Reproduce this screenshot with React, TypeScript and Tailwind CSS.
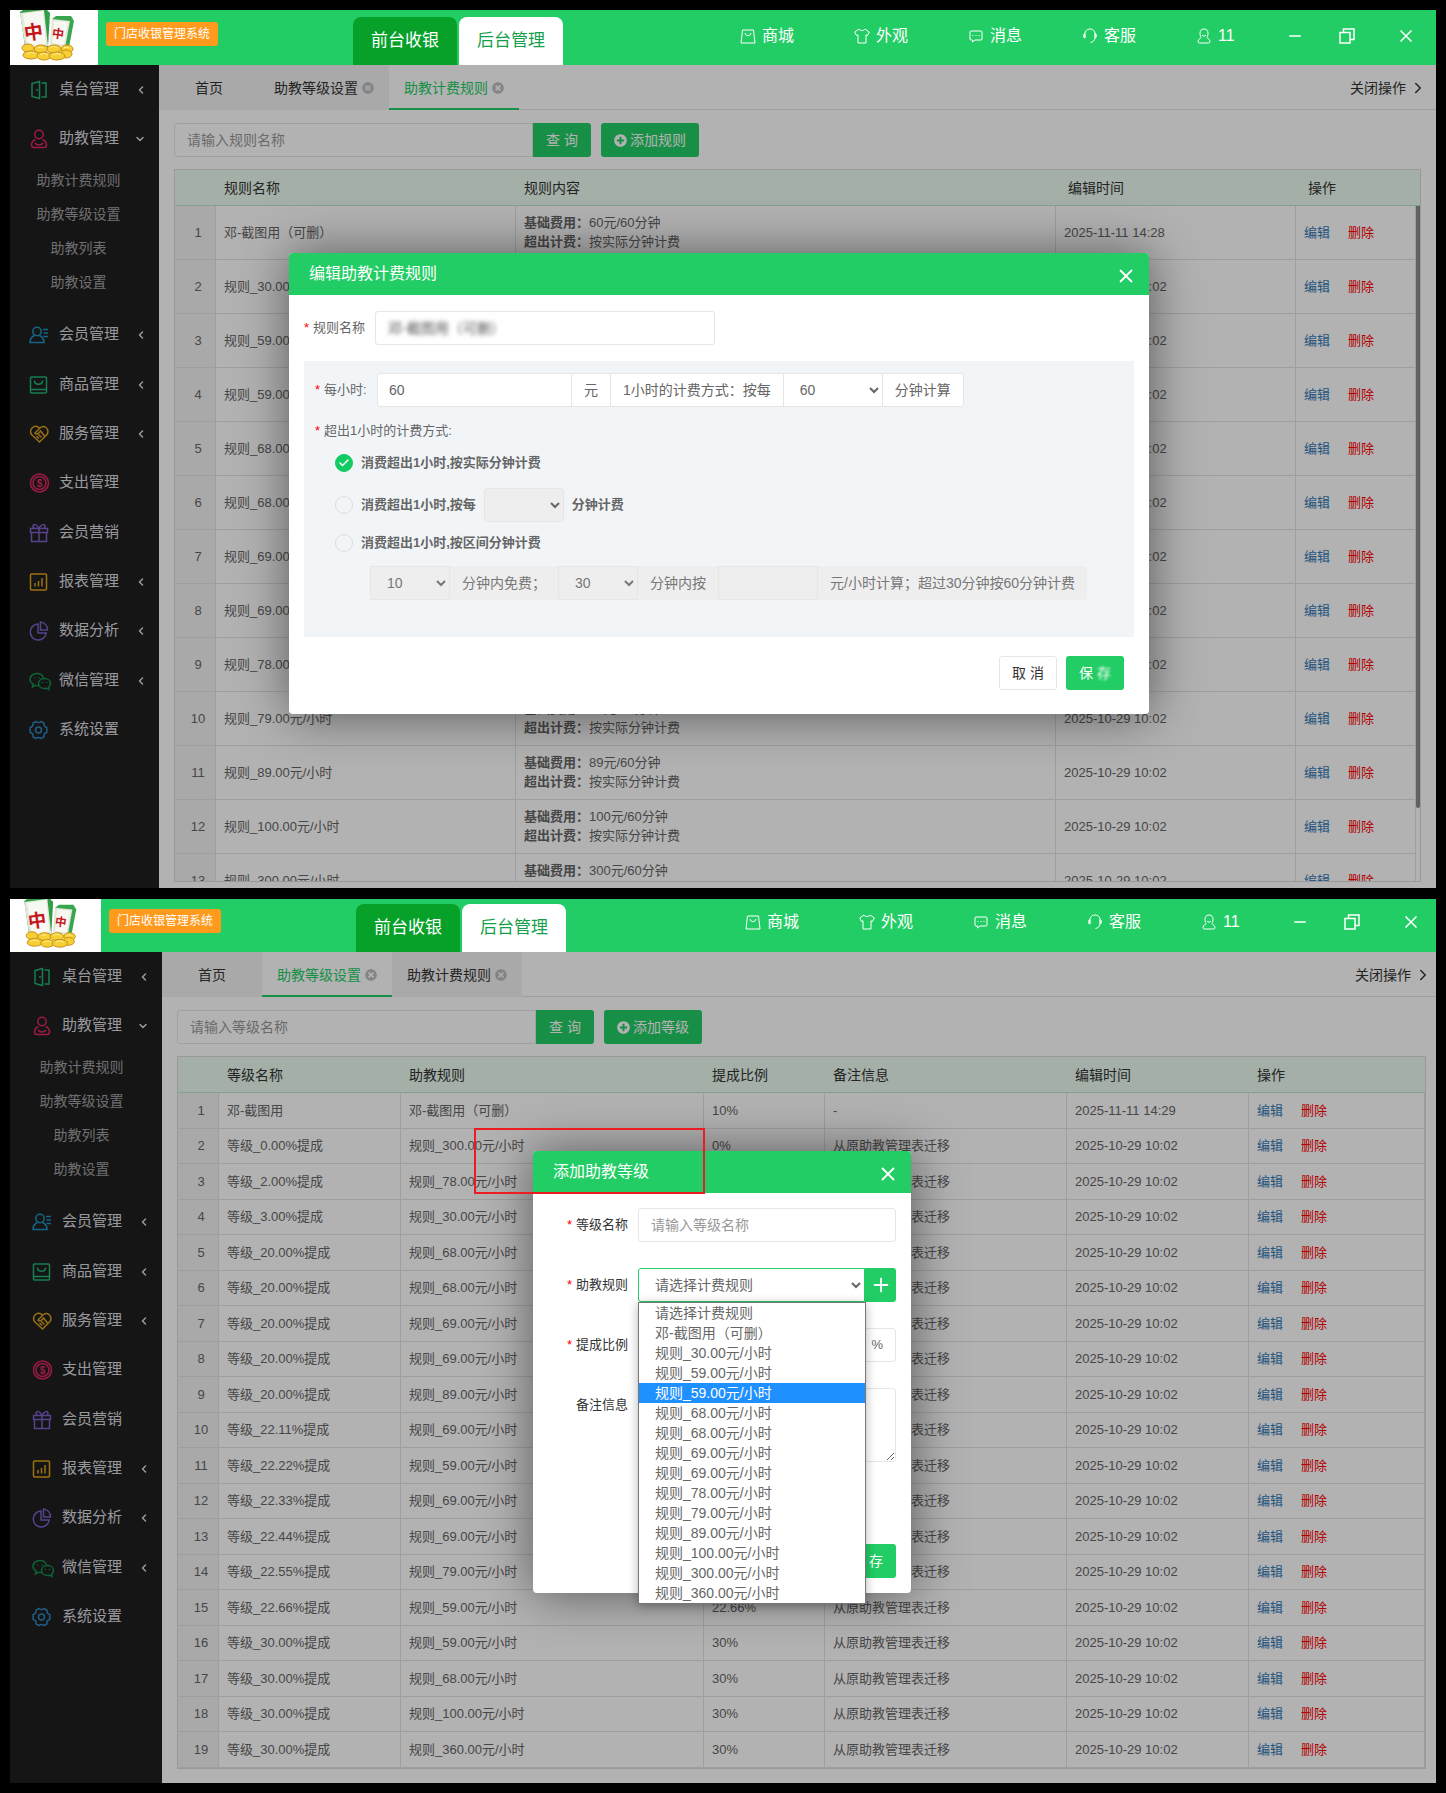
import { ReactNode } from "react";
import clsx from "clsx";
import { Check, ChevronDown, ChevronLeft, ChevronRight, Minus, Plus, X } from "lucide-react";
import { FaPlusCircle, FaTimesCircle } from "react-icons/fa";

const menu = [
  {
    label: "桌台管理",
    color: "text-[#22b573]",
    arrow: "left",
    icon: (
      <>
        <path d="M3 3.5 10.5 1.5v17L3 16.5zM12.5 3H17v14h-4.5M8 9v2" />
      </>
    ),
  },
  {
    label: "助教管理",
    color: "text-[#e02763]",
    arrow: "down",
    children: ["助教计费规则", "助教等级设置", "助教列表", "助教设置"],
    icon: (
      <>
        <circle cx="10" cy="5.5" r="4.2" />
        <path d="M6.5 10.5c-2.5 1-4 3-4 5.500 0 1.500.8 2.500 2.500 2.500h10c1.700 0 2.500-1 2.500-2.500 0-2.500-1.500-4.500-4-5.500M6 14c1 1.500 2.500 2 4 2s3-.5 4-2" />
      </>
    ),
  },
  {
    label: "会员管理",
    color: "text-[#1b93c4]",
    arrow: "left",
    icon: (
      <>
        <circle cx="8" cy="6.5" r="4.2" />
        <path d="M5.5 10.5C3 11.5 1 13.5 1 17.5h14c0-4-2-6-4.500-7M14 4.500h5M14.500 8h4.500M14.500 11.500h4.500" />
      </>
    ),
  },
  {
    label: "商品管理",
    color: "text-[#22b573]",
    arrow: "left",
    icon: (
      <>
        <rect x="1.5" y="2" width="16" height="16" rx="1" />
        <path d="M1.5 14.5h16M5.5 5.5c0 5 8 5 8 0" />
      </>
    ),
  },
  {
    label: "服务管理",
    color: "text-[#dba01f]",
    arrow: "left",
    icon: (
      <>
        <path d="M10.500 4C8.500 2 5.500 2 3.500 3.500 1 5.500 1 9 3 11l7.500 7L17.500 11c2-2 2-5.500-.5-7.500-2-1.500-4.500-1-6 .5L6 9c1 1.500 3 1.200 4-.3l1.500-1.700 4 5M7.500 12l2.500 2.500M9.500 10.500l3 3" />
      </>
    ),
  },
  {
    label: "支出管理",
    color: "text-[#e02763]",
    icon: (
      <>
        <circle cx="10.5" cy="10" r="9" />
        <circle cx="10.5" cy="10" r="6.5" />
        <text x="10.5" y="13.5" textAnchor="middle" fontSize="10" fontWeight="700" fill="currentColor" stroke="none">
          $
        </text>
      </>
    ),
  },
  {
    label: "会员营销",
    color: "text-[#7e5fc9]",
    icon: (
      <>
        <path d="M1.5 5.5h17v4h-17zM2.5 9.5h15v9h-15zM10 5.5v13M10 5.5C8 1 4 .5 4 3.2c0 1.300 1 2.300 2.500 2.300M10 5.500c2-4.500 6-5 6-2.300 0 1.300-1 2.300-2.500 2.300" />
      </>
    ),
  },
  {
    label: "报表管理",
    color: "text-[#e0a21c]",
    arrow: "left",
    icon: (
      <>
        <rect x="1.5" y="2" width="16" height="16" rx="1" />
        <path d="M6 11v3.5M9.500 9v5.500M13 6v8.500" />
      </>
    ),
  },
  {
    label: "数据分析",
    color: "text-[#7e5fc9]",
    arrow: "left",
    icon: (
      <>
        <path d="M9 3a8 8 0 1 0 8.2 9H9zM11.5 1v8h7C18.500 4.500 15.500 1.500 11.500 1z" />
      </>
    ),
  },
  {
    label: "微信管理",
    color: "text-[#138f4b]",
    arrow: "left",
    icon: (
      <>
        <path d="M9.500 14.500c-1 .1-2 0-3-.3L3.500 16l.6-3C2 11.800 1 10.200 1 8.500 1 5 4 2.500 7.800 2.500c3.500 0 6 2 6.700 4.600" />
        <path d="M15.500 7.500c-3.500 0-6 2.200-6 5s2.500 5 6 5c.8 0 1.500-.1 2.200-.3l2.300 1.300-.5-2.200c1.200-.9 2-2.300 2-3.800 0-2.800-2.500-5-6-5z" />
        <path d="M5.500 6.500v1M10 6.500v1M13.500 11v1M17.500 11v1" />
      </>
    ),
  },
  {
    label: "系统设置",
    color: "text-[#2f86bd]",
    icon: (
      <>
        <circle cx="9.5" cy="10" r="3" />
        <path d="M7 1.500c1.500 1.300 3.500 1.300 5 0l3 1.700c-.4 2 .6 3.700 2.800 4.300v5c-2.200.6-3.200 2.300-2.800 4.300l-3 1.700c-1.500-1.300-3.500-1.300-5 0l-3-1.700c.4-2-.6-3.700-2.800-4.300v-5C3.400 6.900 4.400 5.200 4 3.200z" />
      </>
    ),
  },
];

const headerItems = [
  {
    label: "商城",
    icon: <path d="M2.500 2h11l1.500 13H1zM5 5c.5 3.500 5.500 3.500 6 0" />,
  },
  {
    label: "外观",
    icon: <path d="M5 1 .7 4l1.800 3.500L4 6.800V15h8V6.800l1.500.7L15.300 4 11 1C10 3 6 3 5 1z" />,
  },
  {
    label: "消息",
    icon: <path d="M3 3h10q1 0 1 1v7q0 1-1 1H7l-2.500 2v-2H3q-1 0-1-1V4q0-1 1-1zM4.500 7.500h1M7.500 7.500h1M10.500 7.500h1" />,
  },
  {
    label: "客服",
    icon: (
      <path d="M3 9.500C2 3 5 1 8 1s6 2 5 8.500M3 5.500C1 5.500 1 10 3 10zM13 5.500c2 0 2 4.500 0 4.500zM13 10c-.5 2.500-2 4-4.500 4.500" />
    ),
  },
  {
    label: "11",
    icon: (
      <path d="M8 1C5 1 4 3 4 5.500S5 9.500 5 9.500L2.500 12c-1 1.500-.5 3 1 3h9c1.500 0 2-1.500 1-3L11 9.500s1-1.500 1-4S11 1 8 1zM6 7c1 1.500 3 1.500 4 0" />
    ),
  },
];

const rulePrices = ["30.00", "59.00", "59.00", "68.00", "68.00", "69.00", "69.00", "78.00", "79.00", "89.00", "100.00", "300.00"];

const rules = [
  { name: "邓-截图用（可删）", fee: 60, time: "2025-11-11 14:28" },
  ...rulePrices.map((p) => ({ name: `规则_${p}元/小时`, fee: parseInt(p), time: "2025-10-29 10:02" })),
];

const ruleOptions = [
  "请选择计费规则",
  "邓-截图用（可删）",
  ...[...rulePrices, "360.00"].map((p) => `规则_${p}元/小时`),
];

// level, price of the linked rule, commission
const levelData = [
  ["0.00", "300.00", "0"],
  ["2.00", "78.00", "2"],
  ["3.00", "30.00", "3"],
  ["20.00", "68.00", "20"],
  ["20.00", "68.00", "20"],
  ["20.00", "69.00", "20"],
  ["20.00", "69.00", "20"],
  ["20.00", "89.00", "20"],
  ["22.11", "69.00", "22.11"],
  ["22.22", "59.00", "22.22"],
  ["22.33", "69.00", "22.33"],
  ["22.44", "69.00", "22.44"],
  ["22.55", "79.00", "22.55"],
  ["22.66", "59.00", "22.66"],
  ["30.00", "59.00", "30"],
  ["30.00", "68.00", "30"],
  ["30.00", "100.00", "30"],
  ["30.00", "360.00", "30"],
];

const levels = [
  { name: "邓-截图用", rule: "邓-截图用（可删）", ratio: "10%", note: "-", time: "2025-11-11 14:29" },
  ...levelData.map(([level, price, ratio]) => ({
    name: `等级_${level}%提成`,
    rule: `规则_${price}元/小时`,
    ratio: `${ratio}%`,
    note: "从原助教管理表迁移",
    time: "2025-10-29 10:02",
  })),
];

const Logo = () => (
  <svg viewBox="0 0 88 55" className="h-full w-[88px]">
    <path d="M10 2 13 0h24l3 3-2 34H15z" fill="#2f9e46" />
    <path d="M10 3 34 0l4 36-22 6z" fill="#e4e6da" />
    <path d="m13 4 20-3 3 33-18 5z" fill="#f8f8f3" />
    <path d="m42 9 4-3h15l3 5-5 26-3 1z" fill="#37a64e" />
    <path d="m42 9 18 2-5 27-15-4z" fill="#e4e6da" />
    <path d="m44 11 14 1-4 23-12-2z" fill="#f8f8f3" />
    <text x="14" y="29" fontSize="19" fontWeight="700" fill="#c4161c" transform="rotate(-8 24 22)">
      中
    </text>
    <text x="42" y="28" fontSize="12" fontWeight="700" fill="#c4161c" transform="rotate(8 48 24)">
      中
    </text>
    <g fill="#f6cf35" stroke="#c78f12">
      <ellipse cx="18" cy="38" rx="6" ry="4" />
      <ellipse cx="31" cy="39" rx="7" ry="4" />
      <ellipse cx="57" cy="39" rx="6" ry="4" />
      <ellipse cx="44" cy="39" rx="7" ry="4" />
      <ellipse cx="21" cy="45" rx="8" ry="4" />
      <ellipse cx="56" cy="44" rx="6" ry="4" />
      <ellipse cx="34" cy="46" rx="7" ry="4" />
      <ellipse cx="47" cy="46" rx="8" ry="4" />
    </g>
    <g fill="none" stroke="#fff3a0">
      <path d="M17 44c2-2 6-2 8 0M30 45c2-2 6-2 8 0M43 45c2-2 6-2 8 0M40 38c2-2 5-2 7 0M54 38c1-1 4-1 5 0M28 38c1-1 4-1 5 0" />
    </g>
  </svg>
);

const TopBar = ({ compact }: { compact?: boolean }) => (
  <header className={clsx("flex bg-[#23cd65] text-white", compact ? "h-[53px] pr-[18px]" : "h-[55px] pr-[23px]")}>
    <div className={clsx("shrink-0 bg-white", compact ? "w-[91px] pl-[3px]" : "w-[88px]")}>
      <Logo />
    </div>
    <span
      className={clsx(
        "ml-2 h-6 shrink-0 rounded-[3px] bg-[#ff9a1c] px-2 text-xs leading-6",
        compact ? "mt-[10px]" : "mt-3"
      )}
    >
      门店收银管理系统
    </span>
    <nav className="ml-[135px] flex shrink-0 items-end gap-[2px] text-[17px]">
      <button className="h-12 w-[104px] rounded-t-lg bg-[#07a12a]">前台收银</button>
      <button className="flex h-12 w-[104px] flex-col items-center rounded-t-lg bg-white text-[#159f4b]">
        <span className="flex-1 leading-[48px]">后台管理</span>
        <span className="h-[2px] w-[58px] bg-[#159f4b]" />
      </button>
    </nav>
    <div className={clsx("ml-auto flex items-center", compact ? "h-[46px]" : "h-[51px]")}>
      {headerItems.map((item) => (
        <button key={item.label} className="flex w-[114px] items-center gap-[6px] text-base">
          <svg viewBox="0 0 16 16" className="size-4" fill="none" stroke="currentColor" strokeWidth="1">
            {item.icon}
          </svg>
          {item.label}
        </button>
      ))}
      <button aria-label="最小化" className="ml-[-24px] w-[53px]">
        <Minus size={18} strokeWidth={2} />
      </button>
      <button aria-label="还原" className="w-[60px]">
        <svg viewBox="0 0 16 16" className="size-4" fill="none" stroke="currentColor" strokeWidth="1.5">
          <path d="M1 4.5h10V15H1zM4.5 4.5V1H15v10.5h-4" />
        </svg>
      </button>
      <button aria-label="关闭">
        <svg viewBox="0 0 14 14" className="size-[14px]" fill="none" stroke="currentColor" strokeWidth="1.5">
          <path d="m1.5 1.5 11 11M12.5 1.5l-11 11" />
        </svg>
      </button>
    </div>
  </header>
);

const Sidebar = ({ compact }: { compact?: boolean }) => (
  <aside className={clsx("shrink-0 bg-[#1f1f1f]", compact ? "w-[152px] pl-[3px]" : "w-[149px]")}>
    {menu.map((item) => (
      <div key={item.label} className={clsx("nth-[3n]:mb-px", item.children && "mb-[11px]")}>
        <button className="flex h-[49px] w-full items-center gap-[10px] pl-[19px] text-[15px] text-[#dcdce0]">
          <svg
            viewBox="0 0 20 20"
            className={clsx("size-5 overflow-visible", item.color)}
            fill="none"
            stroke="currentColor"
            strokeWidth="1.5"
          >
            {item.icon}
          </svg>
          {item.label}
          {item.arrow === "left" && <ChevronLeft size={12} strokeWidth={3} className="ml-[6px]" />}
          {item.arrow === "down" && <ChevronDown size={12} strokeWidth={3} className="ml-[5px]" />}
        </button>
        {item.children?.map((child) => (
          <button key={child} className="block h-[34px] w-full pr-3 text-center text-sm text-[#a0a0a4]">
            {child}
          </button>
        ))}
      </div>
    ))}
  </aside>
);

const Tabs = ({ active, compact }: { active: string; compact?: boolean }) => (
  <div
    className={clsx(
      "flex h-[45px] items-center border-b border-[#e2e2e2] text-sm text-[#333]",
      compact ? "pr-1" : "pr-[9px]"
    )}
  >
    <button className="h-[45px] w-[100px] bg-[#f3f3f3] pt-[2px]">首页</button>
    {["助教等级设置", "助教计费规则"].map((tab) => (
      <button
        key={tab}
        className={clsx(
          "flex h-[45px] items-center gap-1 border-b-2 px-[15px] pt-1",
          tab === active ? "border-[#23cd65] text-[#23cd65]" : "border-transparent bg-[#f3f3f3]"
        )}
      >
        {tab}
        <FaTimesCircle size={12} className="text-[#bdbdbd]" />
      </button>
    ))}
    <button className="ml-auto flex items-center gap-[3px] pt-[2px]">
      关闭操作
      <ChevronRight size={18} strokeWidth={2} />
    </button>
  </div>
);

const SearchBar = ({ id, placeholder, addLabel }: { id: string; placeholder: string; addLabel: string }) => (
  <div className="flex h-[34px] text-sm text-white">
    <input
      id={id}
      aria-label={placeholder}
      placeholder={placeholder}
      className="w-[359px] rounded-l-[3px] border border-[#e6e6e6] bg-transparent px-3 placeholder:text-[#999]"
    />
    <button className="w-[58px] rounded-r-[3px] bg-[#23cd65]">查 询</button>
    <button className="ml-[10px] flex items-center gap-[3px] rounded-[3px] bg-[#23cd65] px-[13px]">
      <FaPlusCircle size={13} />
      {addLabel}
    </button>
  </div>
);

const Th = ({ children, wide }: { children?: ReactNode; wide?: boolean }) => (
  <th
    className={clsx(
      "h-9 border-b border-[#bfe8cd] bg-[#eafbf0] text-left text-sm font-normal text-[#333]",
      wide ? "px-3" : "px-2"
    )}
  >
    {children}
  </th>
);

const Td = ({ children, index }: { children?: ReactNode; index?: boolean }) => (
  <td className={clsx("border-r border-b border-[#e2e2e2]", index ? "bg-[#f3f3f3] pl-[6px] text-center" : "px-2")}>
    {children}
  </td>
);

const RowActions = () => (
  <div className="flex gap-[18px]">
    <a href="#edit" className="text-[#337ab7]">
      编辑
    </a>
    <a href="#delete" className="text-[#ff0000]">
      删除
    </a>
  </div>
);

const RuleTable = () => (
  <div className="relative max-h-[713px] overflow-hidden border border-[#dcdcdc]">
    <table className="w-full table-fixed border-separate border-spacing-0 text-[13px] text-[#666]">
      <colgroup>
        <col className="w-[41px]" />
        <col className="w-[300px]" />
        <col />
        <col className="w-[240px]" />
        <col className="w-[124px]" />
      </colgroup>
      <thead>
        <tr>
          <Th />
          <Th>规则名称</Th>
          <Th>规则内容</Th>
          <Th wide>编辑时间</Th>
          <Th wide>操作</Th>
        </tr>
      </thead>
      <tbody>
        {rules.map((rule, i) => (
          <tr key={i} className="h-[54px]">
            <Td index>{i + 1}</Td>
            <Td>{rule.name}</Td>
            <Td>
              <div className="pb-[2px] leading-[19px]">
                <p>
                  <b>基础费用：</b>
                  {rule.fee}元/60分钟
                </p>
                <p>
                  <b>超出计费：</b>
                  按实际分钟计费
                </p>
              </div>
            </Td>
            <Td>{rule.time}</Td>
            <Td>
              <RowActions />
            </Td>
          </tr>
        ))}
      </tbody>
    </table>
    <div className="absolute top-9 right-0 bottom-0 w-[5px] border-l border-[#e2e2e2] bg-white">
      <div className="h-[602px] rounded-b bg-[#8c8c8c]" />
    </div>
  </div>
);

const LevelTable = () => (
  <div className="border border-[#dcdcdc]">
    <table className="w-full table-fixed border-separate border-spacing-0 text-[13px] text-[#666]">
      <colgroup>
        <col className="w-[41px]" />
        <col className="w-[182px]" />
        <col className="w-[303px]" />
        <col className="w-[121px]" />
        <col className="w-[242px]" />
        <col className="w-[182px]" />
        <col />
      </colgroup>
      <thead>
        <tr>
          <Th />
          <Th>等级名称</Th>
          <Th>助教规则</Th>
          <Th>提成比例</Th>
          <Th>备注信息</Th>
          <Th>编辑时间</Th>
          <Th>操作</Th>
        </tr>
      </thead>
      <tbody>
        {levels.map((level, i) => (
          <tr key={i} className="h-[35px] odd:h-9">
            <Td index>{i + 1}</Td>
            <Td>{level.name}</Td>
            <Td>{level.rule}</Td>
            <Td>{level.ratio}</Td>
            <Td>{level.note}</Td>
            <Td>{level.time}</Td>
            <Td>
              <RowActions />
            </Td>
          </tr>
        ))}
      </tbody>
    </table>
  </div>
);

const ModalHeader = ({ title }: { title: string }) => (
  <div className="flex h-[42px] items-center justify-between rounded-t bg-[#23cd65] pr-3 pl-5 text-base text-white">
    <h2>{title}</h2>
    <button aria-label="关闭窗口" className="pt-1">
      <X size={22} strokeWidth={2} />
    </button>
  </div>
);

const Required = () => <span className="mr-1 text-[#ff0000]">*</span>;

const Radio = ({ id, label, checked }: { id: string; label: string; checked?: boolean }) => (
  <label htmlFor={id} className="flex items-center gap-2 font-bold">
    <span className="relative flex size-[18px]">
      <input
        type="radio"
        name="overtime"
        id={id}
        defaultChecked={checked}
        className="size-[18px] appearance-none rounded-full border border-[#dcdcdc] checked:border-[#12cb63] checked:bg-[#12cb63]"
      />
      {checked && <Check size={12} strokeWidth={3} className="absolute top-[3px] left-[3px] text-white" />}
    </span>
    {label}
  </label>
);

const EditRuleModal = () => (
  <div className="w-[860px] rounded bg-white text-[13px] text-[#666] shadow-[1px_1px_50px_rgba(0,0,0,0.5)]">
    <ModalHeader title="编辑助教计费规则" />
    <div className="flex flex-col px-[15px] pt-4 pb-6">
      <div className="flex items-center">
        <label htmlFor="rule-name" className="w-[71px]">
          <Required />
          规则名称
        </label>
        <div className="flex h-[34px] w-[340px] items-center rounded-[3px] border border-[#e6e6e6] px-3">
          <input id="rule-name" defaultValue="邓-截图用（可删）" className="w-full text-sm text-[#555] blur-[2px]" />
        </div>
      </div>
      <div className="mt-4 bg-[#f1f5f8] pt-3 pr-3 pb-[37px] pl-[11px]">
        <div className="flex items-center">
          <label htmlFor="hour-price" className="w-[62px]">
            <Required />
            每小时:
          </label>
          <div className="flex h-[34px] items-center divide-x divide-[#e6e6e6] rounded-[3px] border border-[#e6e6e6] bg-white text-sm">
            <input id="hour-price" defaultValue="60" className="h-8 w-[194px] px-[11px]" />
            <span className="px-3 leading-8">元</span>
            <span className="px-3 leading-8">1小时的计费方式：按每</span>
            <select aria-label="计费分钟" className="h-8 w-[99px] bg-white px-3">
              <option>60</option>
            </select>
            <span className="px-3 leading-8">分钟计算</span>
          </div>
        </div>
        <p className="mt-[14px] leading-5">
          <Required />
          超出1小时的计费方式:
        </p>
        <div className="flex flex-col pl-5">
          <div className="mt-3 flex h-5 items-center">
            <Radio id="by-minute" label="消费超出1小时,按实际分钟计费" checked />
          </div>
          <div className="mt-[15px] flex h-[34px] items-center gap-2">
            <Radio id="by-step" label="消费超出1小时,按每" />
            <select
              disabled
              aria-label="每段分钟"
              className="h-[34px] w-20 rounded-[3px] border border-[#e6e6e6] bg-[#eeeeee] px-1 opacity-100"
            />
            <b>分钟计费</b>
          </div>
          <div className="mt-[11px] flex h-5 items-center">
            <Radio id="by-range" label="消费超出1小时,按区间分钟计费" />
          </div>
          <div className="mt-[13px] ml-[35px] flex h-[34px] items-center self-start rounded-[3px] bg-[#eeeeee] text-sm text-[#777]">
            <select
              disabled
              aria-label="免费分钟"
              className="h-[34px] w-20 border border-[#e6e6e6] bg-[#eeeeee] px-3 opacity-100"
            >
              <option>10</option>
            </select>
            <span className="w-[108px] pl-3">分钟内免费；</span>
            <select
              disabled
              aria-label="区间分钟"
              className="h-[34px] w-20 border border-[#e6e6e6] bg-[#eeeeee] px-3 opacity-100"
            >
              <option>30</option>
            </select>
            <span className="px-3">分钟内按</span>
            <input disabled aria-label="区间价格" className="h-[34px] w-[100px] border border-[#e6e6e6]" />
            <span className="px-3">元/小时计算；超过30分钟按60分钟计费</span>
          </div>
        </div>
      </div>
      <div className="mt-[19px] mr-[10px] flex justify-end gap-[9px] text-sm">
        <button className="h-[34px] w-[58px] rounded-[3px] border border-[#e6e6e6] text-[#333]">取 消</button>
        <button className="h-[34px] w-[58px] rounded-[3px] bg-[#23cd65] text-white">
          保 <span className="inline-block blur-[1px]">存</span>
        </button>
      </div>
    </div>
  </div>
);

const AddLevelModal = () => (
  <div className="relative w-[378px] rounded bg-white text-[13px] text-[#333] shadow-[1px_1px_50px_rgba(0,0,0,0.5)]">
    <ModalHeader title="添加助教等级" />
    <div className="grid grid-cols-[95px_1fr] gap-x-[10px] gap-y-[26px] pt-[15px] pr-[15px] leading-[34px]">
      <label htmlFor="level-name" className="text-right">
        <Required />
        等级名称
      </label>
      <input
        id="level-name"
        placeholder="请输入等级名称"
        className="h-[34px] w-full rounded-[3px] border border-[#e6e6e6] px-3 text-sm placeholder:text-[#999]"
      />
      <label htmlFor="level-rule" className="text-right">
        <Required />
        助教规则
      </label>
      <div className="relative flex h-[34px] text-sm leading-5 text-[#666]">
        <select
          id="level-rule"
          className="h-[34px] min-w-0 flex-1 rounded-l-[3px] border border-[#23cd65] bg-white px-3"
        >
          <option>{ruleOptions[0]}</option>
        </select>
        <button
          aria-label="新增规则"
          className="flex w-[31px] items-center justify-center rounded-r-[3px] bg-[#23cd65] text-white"
        >
          <Plus size={22} strokeWidth={2} />
        </button>
        <ul
          role="listbox"
          className="absolute top-[34px] right-[30px] left-0 z-10 border border-[#767676] bg-white shadow-[0_2px_10px_rgba(0,0,0,0.3)]"
        >
          {ruleOptions.map((option, i) => (
            <li
              key={i}
              role="option"
              aria-selected={i === 4}
              className={clsx("h-5 pl-4", i === 4 && "bg-[#1e90ff] text-white")}
            >
              {option}
            </li>
          ))}
        </ul>
      </div>
      <label htmlFor="level-ratio" className="text-right">
        <Required />
        提成比例
      </label>
      <div className="flex h-[34px] rounded-[3px] border border-[#e6e6e6] leading-8 text-[#666]">
        <input id="level-ratio" className="min-w-0 flex-1 px-3" />
        <span className="border-l border-[#e6e6e6] px-3">%</span>
      </div>
      <label htmlFor="level-note" className="text-right">
        备注信息
      </label>
      <textarea id="level-note" className="block h-[74px] w-full rounded-[3px] border border-[#e6e6e6]" />
    </div>
    <div className="flex justify-end gap-[9px] pt-[82px] pr-[15px] pb-[15px] text-sm">
      <button className="h-[34px] w-[58px] rounded-[3px] bg-[#23cd65] text-white">保 存</button>
    </div>
    <div className="pointer-events-none absolute top-[-23px] left-[-59px] z-20 h-[66px] w-[231px] border-2 border-[#ed1c24]" />
  </div>
);

const App = () => {
  return (
    <div className="flex flex-col gap-[11px] bg-black p-[10px] font-['Liberation_Sans','Noto_Sans_CJK_SC',sans-serif]">
      <section className="bg-white">
        <TopBar />
        <div className="relative flex">
          <Sidebar />
          <main className="min-w-0 flex-1">
            <Tabs active="助教计费规则" />
            <div className="flex flex-col gap-3 pt-[13px] pr-[15px] pb-[6px] pl-[15px]">
              <SearchBar id="rule-search" placeholder="请输入规则名称" addLabel="添加规则" />
              <RuleTable />
            </div>
          </main>
          <div className="absolute inset-0 flex items-start justify-center overflow-hidden bg-black/30 pt-[188px] pr-2">
            <EditRuleModal />
          </div>
        </div>
      </section>
      <section className="bg-white">
        <TopBar compact />
        <div className="relative flex">
          <Sidebar compact />
          <main className="min-w-0 flex-1">
            <Tabs active="助教等级设置" compact />
            <div className="flex flex-col gap-3 pt-[13px] pr-[10px] pb-[14px] pl-[15px]">
              <SearchBar id="level-search" placeholder="请输入等级名称" addLabel="添加等级" />
              <LevelTable />
            </div>
          </main>
          <div className="absolute inset-0 flex items-start justify-center overflow-hidden bg-black/30 pt-[199px] pr-[2px]">
            <AddLevelModal />
          </div>
        </div>
      </section>
    </div>
  );
};

export default App;
